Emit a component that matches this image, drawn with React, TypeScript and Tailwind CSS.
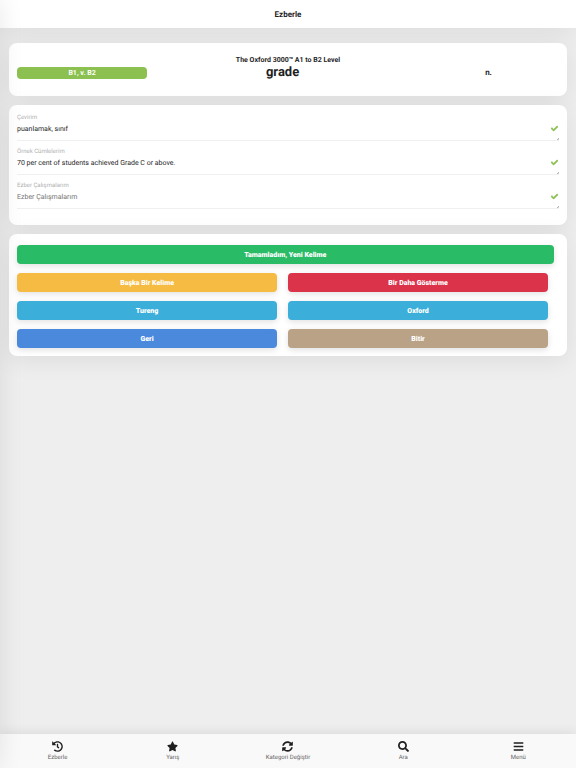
import React, { useState } from 'react';
import type { IconType } from 'react-icons';
import { FaBars, FaCheck, FaHistory, FaSearch, FaStar, FaSyncAlt } from 'react-icons/fa';

interface Field {
  id: string;
  label: string;
  value: string;
}

interface NavItem {
  label: string;
  icon: IconType;
}

const initialFields: Field[] = [
  { id: 'ceviri', label: 'Çevirim', value: 'puanlamak, sınıf' },
  { id: 'ornek', label: 'Örnek Cümlelerim', value: '70 per cent of students achieved Grade C or above.' },
  { id: 'ezber', label: 'Ezber Çalışmalarım', value: '' },
];

const actions = [
  { label: 'Başka Bir Kelime', color: 'bg-[#f6bb42]' },
  { label: 'Bir Daha Gösterme', color: 'bg-[#da334a]' },
  { label: 'Tureng', color: 'bg-[#3bafda]' },
  { label: 'Oxford', color: 'bg-[#3bafda]' },
  { label: 'Geri', color: 'bg-[#4a89dc]' },
  { label: 'Bitir', color: 'bg-[#baa286]' },
];

const navItems: NavItem[] = [
  { label: 'Ezberle', icon: FaHistory },
  { label: 'Yarış', icon: FaStar },
  { label: 'Kategori Değiştir', icon: FaSyncAlt },
  { label: 'Ara', icon: FaSearch },
  { label: 'Menü', icon: FaBars },
];

const Card: React.FC<{ className?: string; children: React.ReactNode }> = ({ className = '', children }) => (
  <section className={`rounded-lg bg-white px-2 shadow-[0_4px_24px_rgba(0,0,0,0.08)] ${className}`}>{children}</section>
);

const ActionButton: React.FC<{ label: string; className: string }> = ({ label, className }) => (
  <button
    type="button"
    className={`block h-[19px] rounded pt-px text-[7px] leading-[18px] font-black text-white shadow-[0_2px_6px_rgba(0,0,0,0.12)] [text-rendering:geometricPrecision] ${className}`}
  >
    {label}
  </button>
);

const WordField: React.FC<{ field: Field; onChange: (value: string) => void }> = ({ field, onChange }) => (
  <div className="relative h-[34px] border-b border-[#f0f0f0]">
    <label htmlFor={field.id} className="block pt-[7px] text-[6px] leading-[8px] text-[#b0b0b0]">
      {field.label}
    </label>
    <textarea
      id={field.id}
      rows={1}
      value={field.value}
      placeholder={field.label}
      onChange={(e) => onChange(e.target.value)}
      className="block h-[14px] w-full resize-none overflow-hidden pr-5 text-[7px] leading-[14px] text-[#1f1f1f] outline-none [text-rendering:geometricPrecision] placeholder:text-[#757575]"
    />
    <FaCheck className="absolute top-[18px] right-px size-[7px] stroke-[#8cc152] stroke-[40] text-[#8cc152]" />
    {/* resize grip */}
    <svg viewBox="0 0 2 2" className="absolute right-0 bottom-0 size-[2px]" stroke="#888" strokeWidth="0.6">
      <path d="M0 2L2 0M1.2 2L2 1.2" />
    </svg>
  </div>
);

const App: React.FC = () => {
  const [fields, setFields] = useState<Field[]>(initialFields);

  const updateField = (id: string, value: string) => {
    setFields(fields.map((f) => (f.id === id ? { ...f, value } : f)));
  };

  return (
    <div className="flex min-h-screen flex-col overflow-x-hidden bg-[#eeeeee] font-[Roboto,sans-serif] text-[#1f1f1f] [text-rendering:geometricPrecision]">
      <header className="bg-white pt-[5px] pb-[3px] shadow-[0_4px_24px_rgba(0,0,0,0.08)]">
        <h1 className="text-center text-[8px] leading-5 font-bold">Ezberle</h1>
      </header>

      <main className="flex flex-1 flex-col gap-[9px] px-[9px] pt-[15px]">
        <Card className="pt-3 pb-[15px]">
          <p className="text-center text-[7px] leading-[10px] font-bold">The Oxford 3000™ A1 to B2 Level</p>
          <div className="flex items-center text-center">
            <span className="w-[24%] rounded bg-[#8cc152] text-[7px] leading-3 font-bold text-white">B1, v. B2</span>
            <h2 className="w-1/2 text-[13px] leading-4 font-bold">grade</h2>
            <span className="w-[26%] text-[8px] leading-3 font-bold">n.</span>
          </div>
        </Card>

        <Card className="pt-[2px] pb-4">
          {fields.map((field) => (
            <WordField key={field.id} field={field} onChange={(value) => updateField(field.id, value)} />
          ))}
        </Card>

        <Card className="pt-[11px] pb-2">
          <ActionButton label="Tamamladım, Yeni Kelime" className="w-[99%] bg-[#2abb67]" />
          <div className="mt-[9px] grid grid-cols-[48%_48%] gap-x-[2%] gap-y-[9px]">
            {actions.map((action) => (
              <ActionButton key={action.label} label={action.label} className={action.color} />
            ))}
          </div>
        </Card>
      </main>

      <nav className="sticky bottom-0 grid grid-cols-5 bg-[#f9f9f9] pt-[7px] pb-[6px] shadow-[0_-2px_12px_rgba(0,0,0,0.08)]">
        {navItems.map(({ label, icon: Icon }) => (
          <a key={label} href="#" className="flex flex-col items-center gap-[2px] text-[6px] leading-[8px] text-[#666]">
            <Icon className="size-[11px] text-[#1f1f1f]" />
            {label}
          </a>
        ))}
      </nav>

      {/* closed side menu, only its shadow reaches the page */}
      <aside className="pointer-events-none fixed inset-y-0 right-full w-40 bg-white shadow-[0_0_24px_rgba(0,0,0,0.09)]" />
    </div>
  );
};

export default App;
